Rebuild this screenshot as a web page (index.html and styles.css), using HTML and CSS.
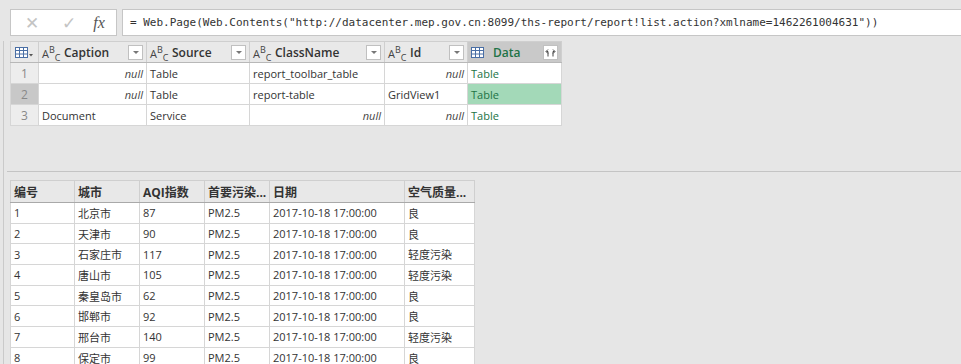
FILE: index.html
```html
<html>
<head>
  <meta charset="UTF-8">
  <title>Power Query</title>
  <link rel="stylesheet" href="styles.css">
</head>
<body>
  <div class="formula-bar">
    <div class="fx-box">
      <span class="fx-btn cancel">&#x2715;</span>
      <span class="fx-btn ok">&#x2713;</span>
      <span class="fx-btn fx">fx</span>
    </div>
    <div class="formula-input">= Web.Page(Web.Contents("http://datacenter.mep.gov.cn:8099/ths-report/report!list.action?xmlname=1462261004631"))</div>
  </div>

  <div class="workspace">
    <div class="query-pane">
      <table class="grid query">
        <colgroup>
          <col style="width:28px"><col style="width:108px"><col style="width:103px">
          <col style="width:135px"><col style="width:83px"><col style="width:94px">
        </colgroup>
        <thead>
          <tr>
            <th class="corner">
              <svg width="18" height="11" viewBox="0 0 18 11">
                <rect x="0.5" y="0.5" width="12" height="10" fill="#fff" stroke="#4a6fa5"/>
                <path d="M0.5 3.5H12.5M0.5 7H12.5M4.5 0.5V10.5M8.5 0.5V10.5" stroke="#4a6fa5" fill="none"/>
                <path d="M14 7h4l-2 2.5z" fill="#555"/>
              </svg>
            </th>
            <th><div class="hd"><span class="abc">A<sup>B</sup><sub>C</sub></span><span class="name">Caption</span><span class="drop"></span></div></th>
            <th><div class="hd"><span class="abc">A<sup>B</sup><sub>C</sub></span><span class="name">Source</span><span class="drop"></span></div></th>
            <th><div class="hd"><span class="abc">A<sup>B</sup><sub>C</sub></span><span class="name">ClassName</span><span class="drop"></span></div></th>
            <th><div class="hd"><span class="abc">A<sup>B</sup><sub>C</sub></span><span class="name">Id</span><span class="drop"></span></div></th>
            <th class="data-col">
              <div class="hd">
                <svg class="tbl-icon" width="13" height="11" viewBox="0 0 13 11">
                  <rect x="0.5" y="0.5" width="12" height="10" fill="#fff" stroke="#4a6fa5"/>
                  <path d="M0.5 3.5H12.5M0.5 7H12.5M4.5 0.5V10.5M8.5 0.5V10.5" stroke="#4a6fa5" fill="none"/>
                </svg>
                <span class="name">Data</span>
                <span class="expand">
                  <svg width="11" height="9" viewBox="0 0 11 9">
                    <path d="M3 8.5V3.5H1.5M3 1.5L1 3.5L3 5.5" stroke="#444" fill="none"/>
                    <path d="M8 8.5V3.5H9.5M8 1.5L10 3.5L8 5.5" stroke="#444" fill="none"/>
                  </svg>
                </span>
              </div>
            </th>
          </tr>
        </thead>
        <tbody>
          <tr>
            <td class="rn">1</td><td class="null">null</td><td>Table</td><td>report_toolbar_table</td><td class="null">null</td><td class="link">Table</td>
          </tr>
          <tr class="sel">
            <td class="rn">2</td><td class="null">null</td><td>Table</td><td>report-table</td><td>GridView1</td><td class="link active">Table</td>
          </tr>
          <tr>
            <td class="rn">3</td><td>Document</td><td>Service</td><td class="null">null</td><td class="null">null</td><td class="link">Table</td>
          </tr>
        </tbody>
      </table>
    </div>

    <div class="result-pane">
      <table class="grid result">
        <colgroup>
          <col style="width:64px"><col style="width:65px"><col style="width:65px">
          <col style="width:65px"><col style="width:135px"><col style="width:70px">
        </colgroup>
        <thead>
          <tr><th>编号</th><th>城市</th><th>AQI指数</th><th>首要污染...</th><th>日期</th><th>空气质量...</th></tr>
        </thead>
        <tbody>
          <tr><td>1</td><td>北京市</td><td>87</td><td>PM2.5</td><td>2017-10-18 17:00:00</td><td>良</td></tr>
          <tr><td>2</td><td>天津市</td><td>90</td><td>PM2.5</td><td>2017-10-18 17:00:00</td><td>良</td></tr>
          <tr><td>3</td><td>石家庄市</td><td>117</td><td>PM2.5</td><td>2017-10-18 17:00:00</td><td>轻度污染</td></tr>
          <tr><td>4</td><td>唐山市</td><td>105</td><td>PM2.5</td><td>2017-10-18 17:00:00</td><td>轻度污染</td></tr>
          <tr><td>5</td><td>秦皇岛市</td><td>62</td><td>PM2.5</td><td>2017-10-18 17:00:00</td><td>良</td></tr>
          <tr><td>6</td><td>邯郸市</td><td>92</td><td>PM2.5</td><td>2017-10-18 17:00:00</td><td>良</td></tr>
          <tr><td>7</td><td>邢台市</td><td>140</td><td>PM2.5</td><td>2017-10-18 17:00:00</td><td>轻度污染</td></tr>
          <tr><td>8</td><td>保定市</td><td>99</td><td>PM2.5</td><td>2017-10-18 17:00:00</td><td>良</td></tr>
        </tbody>
      </table>
    </div>
  </div>
</body>
</html>
```

FILE: styles.css
```css
html, body {
  margin: 0;
  height: 100%;
  overflow: hidden;
}
body {
  background: #e6e6e6;
  font-family: "Open Sans", "Noto Sans CJK SC", sans-serif;
  font-size: 11px;
  color: #333;
}

/* formula bar */
.formula-bar {
  display: flex;
  gap: 5px;
  padding: 9px 0 0 10px;
  box-sizing: border-box;
  height: 41px;
}
.fx-box {
  width: 107px;
  height: 27px;
  box-sizing: border-box;
  background: #fff;
  border: 1px solid #c6c6c6;
  display: flex;
  align-items: center;
  padding-left: 4px;
}
.fx-btn {
  width: 34px;
  text-align: center;
  color: #c4c4c4;
  font-family: "DejaVu Sans", sans-serif;
  font-size: 17px;
}
.fx-btn.ok {
  width: 40px;
}
.fx-btn.fx {
  width: 20px;
  color: #555;
  font-family: "Liberation Serif", serif;
  font-style: italic;
  font-size: 16px;
}
.formula-input {
  flex: 1;
  height: 27px;
  box-sizing: border-box;
  background: #fff;
  border: 1px solid #c6c6c6;
  border-right: 0;
  padding-left: 7px;
  line-height: 25px;
  font-family: "DejaVu Sans Mono", monospace;
  font-size: 11px;
  color: #333;
  white-space: nowrap;
}

/* panes */
.workspace {
  margin-left: 3px;
  border-left: 1px solid #cacaca;
  height: 323px;
}
.query-pane {
  height: 130px;
  padding-left: 6px;
}
.result-pane {
  margin-left: 3px;
  border-top: 1px solid #c4c4c4;
  padding: 8px 0 0 3px;
}

/* grids */
.grid {
  border-collapse: collapse;
  table-layout: fixed;
  background: #fff;
  font-family: "Open Sans", "Noto Sans CJK SC", sans-serif;
  font-size: 11px;
  color: #333;
}
.grid.query {
  width: 551px;
}
.grid.result {
  width: 464px;
}
.grid th, .grid td {
  border: 1px solid #d6d6d6;
  padding: 0 3px;
  white-space: nowrap;
  overflow: hidden;
  text-align: left;
  font-size: 11px;
}
.query th {
  height: 20px;
  background: #e9e9e9;
  border-color: #cfcfcf;
  border-bottom-color: #b8b8b8;
  font-weight: 600;
  font-size: 12px;
  color: #333;
}
.query td {
  height: 21px;
}
.query th.corner {
  padding: 0 0 0 4px;
}
.hd {
  display: flex;
  align-items: center;
  height: 20px;
}
.abc {
  font-size: 11px;
  font-weight: 400;
  color: #444;
  width: 22px;
  line-height: 1;
  position: relative;
  top: 1px;
  white-space: nowrap;
}
.abc sup, .abc sub {
  font-size: 9px;
}
.abc sup {
  vertical-align: 5px;
}
.abc sub {
  vertical-align: -3px;
}
.hd .name {
  flex: 1;
}
.drop {
  width: 13px;
  height: 13px;
  border: 1px solid #c0c0c0;
  background: #fff;
  position: relative;
}
.drop::after {
  content: "";
  position: absolute;
  left: 4px;
  top: 5px;
  border-left: 3px solid transparent;
  border-right: 3px solid transparent;
  border-top: 3px solid #777;
}
.query th.data-col {
  background: #c9c9c9;
  color: #217346;
}
.tbl-icon {
  margin-right: 9px;
}
.expand {
  width: 15px;
  height: 15px;
  background: #fff;
  border: 1px solid #c0c0c0;
  box-sizing: border-box;
  display: flex;
  align-items: center;
  justify-content: center;
}
.query td.rn {
  background: #ededed;
  color: #888;
  text-align: center;
  font-size: 12px;
  padding: 0;
}
.query tr.sel td.rn {
  background: #c8c8c8;
}
.query td.null {
  text-align: right;
  font-style: italic;
  color: #444;
}
.query td.link {
  color: #217346;
}
.query td.link.active {
  background: #a3d9b8;
}

.result th {
  height: 22px;
  background: #e8e8e8;
  border-color: #cfcfcf;
  border-bottom: 1px solid #a9a9a9;
  font-weight: 700;
  font-size: 12px;
  color: #333;
}
.result td {
  height: 20.7px;
}
```
